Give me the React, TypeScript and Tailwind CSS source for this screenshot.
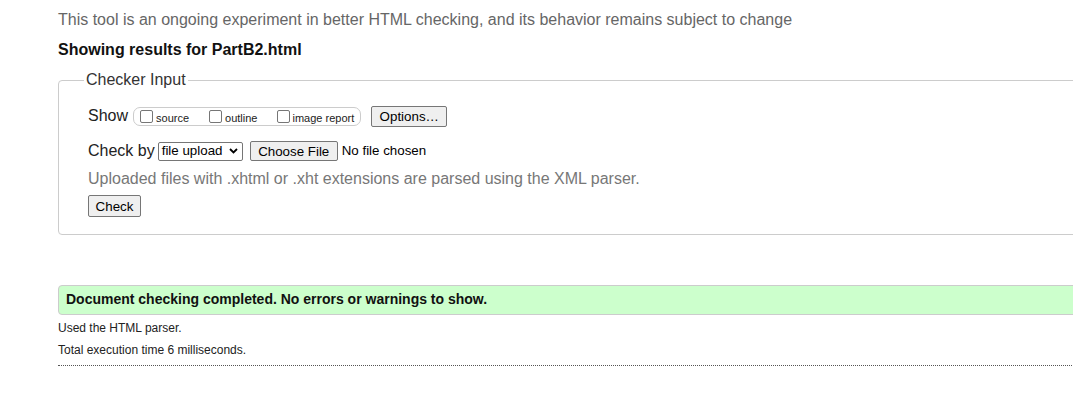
import React from "react";

function Cb() {
  return <span className="inline-block w-[13px] h-[13px] border border-[#767676] rounded-[2px] bg-white shrink-0" />;
}

export default function App() {
  return (
    <div className="w-full h-[404px] overflow-hidden bg-white font-['Liberation_Sans',Arial,sans-serif] text-[#222]">
      <div className="w-[1200px] pl-[58px]">
        <p className="mt-[11px] text-[16px] leading-[18px] text-[#666]">
          This tool is an ongoing experiment in better HTML checking, and its behavior remains subject to change
        </p>
        <p className="mt-[12px] text-[16px] leading-[18px] font-bold text-[#111]">Showing results for PartB2.html</p>
        <fieldset className="mt-[12px] border border-[#ccc] rounded-[4px] pl-[29px] pb-[16px]">
          <legend className="ml-[-4px] px-[2px] text-[16px] leading-[18px] text-[#333]">Checker Input</legend>
          <div className="mt-[16px] h-[22px] flex items-center">
            <span className="text-[16px] leading-[18px]">Show</span>
            <div className="ml-[5px] h-[19px] flex items-center border border-[#ccc] rounded-[7px] pl-[6px] pr-[6px]">
              <Cb />
              <span className="ml-[3px] text-[11px] leading-[12px] mt-[3px] text-[#222]">source</span>
              <span className="ml-[20px]" />
              <Cb />
              <span className="ml-[3px] text-[11px] leading-[12px] mt-[3px] text-[#222]">outline</span>
              <span className="ml-[20px]" />
              <Cb />
              <span className="ml-[2px] text-[11px] leading-[12px] mt-[3px] text-[#222]">image report</span>
            </div>
            <button className="ml-[10px] h-[21px] w-[76px] bg-[#efefef] border border-[#767676] rounded-[2px] text-[13.33px] leading-[15px] text-black">
              Options…
            </button>
          </div>
          <div className="mt-[13px] h-[22px] flex items-center">
            <span className="text-[16px] leading-[18px]">Check by</span>
            <div className="ml-[3px] h-[19px] w-[85px] flex items-center justify-between border border-[#767676] rounded-[2px] bg-white pl-[3px] pr-[4px] text-[13.33px] text-black">
              <span>file upload</span>
              <svg width="9" height="6" viewBox="0 0 9 6">
                <path d="M1 1 L4.5 4.5 L8 1" stroke="#000" strokeWidth="1.8" fill="none" />
              </svg>
            </div>
            <button className="ml-[7px] h-[20px] w-[88px] bg-[#efefef] border border-[#767676] rounded-[2px] text-[13.33px] leading-[15px] text-black">
              Choose File
            </button>
            <span className="ml-[4px] text-[13.33px] text-black">No file chosen</span>
          </div>
          <p className="mt-[8px] text-[16px] leading-[18px] text-[#777]">
            Uploaded files with .xhtml or .xht extensions are parsed using the XML parser.
          </p>
          <button className="mt-[7px] h-[22px] w-[53px] bg-[#efefef] border border-[#767676] rounded-[2px] text-[13.33px] leading-[15px] text-black">
            Check
          </button>
        </fieldset>
        <div className="mt-[50px] h-[30px] flex items-center bg-[#ccffcc] border border-[#ccc] rounded-[4px] pl-[7px] text-[14px] font-bold text-[#111]">
          Document checking completed. No errors or warnings to show.
        </div>
        <p className="mt-[6px] text-[12px] leading-[14px] text-[#222]">Used the HTML parser.</p>
        <p className="mt-[8px] text-[12px] leading-[14px] text-[#222]">Total execution time 6 milliseconds.</p>
        <div className="mt-[8px] border-t border-dotted border-[#555]" />
      </div>
    </div>
  );
}
